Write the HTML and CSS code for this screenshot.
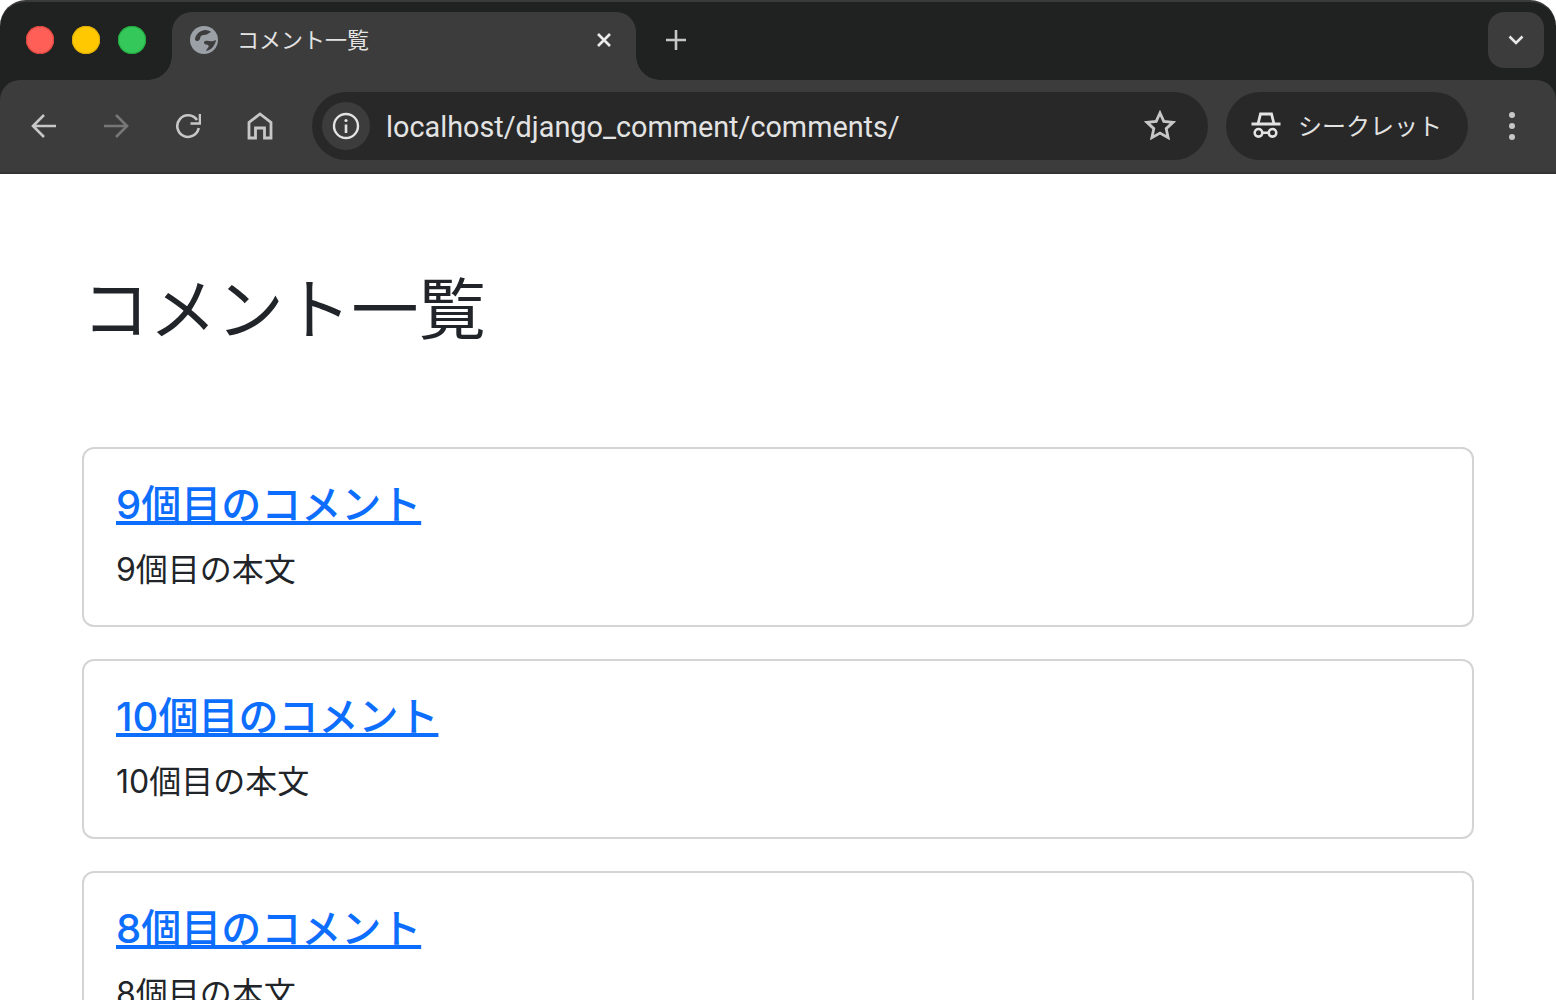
FILE: index.html
```html
<!DOCTYPE html>
<html lang="ja">
<head>
	<title>コメント一覧</title>
	<meta charset="utf-8"/>
	<link rel="stylesheet" href="styles.css">
</head>
<body>
	<div class="window">
		<header class="browser">
			<div class="tabstrip">
				<div class="lights">
					<span class="light red"></span>
					<span class="light yellow"></span>
					<span class="light green"></span>
				</div>
				<div class="tab">
					<svg class="favicon" width="28" height="28" viewBox="0 0 28 28">
						<circle cx="14" cy="14" r="14" fill="#9aa0a6"/>
						<path d="M5 14C5 9 9 5 15 4c3 0 5 1 6 2-3 1-4 3-7 3-3 0-4 2-4 4-1 2-3 3-5 1z" fill="#3c3c3c"/>
						<path d="M14 16c3-3 6 1 12-2-1 6-5 10-10 11 1-3 4-4 2-6-2-1-4 0-4-3z" fill="#3c3c3c"/>
					</svg>
					<span class="tab-title">コメント一覧</span>
					<svg class="tab-close" width="16" height="16" viewBox="0 0 16 16">
						<path d="M2 2l12 12M14 2L2 14" stroke="#ececec" stroke-width="2.6" fill="none"/>
					</svg>
				</div>
				<svg class="new-tab" width="20" height="20" viewBox="0 0 20 20">
					<path d="M10 0v20M0 10h20" stroke="#c7c7c7" stroke-width="2.6" fill="none"/>
				</svg>
				<div class="tab-search">
					<svg width="16" height="10" viewBox="0 0 16 10">
						<path d="M1.5 1.5L8 8l6.5-6.5" stroke="#e8e8e8" stroke-width="2.6" fill="none"/>
					</svg>
				</div>
			</div>
			<div class="toolbar">
				<button class="tool">
					<svg width="26" height="26" viewBox="0 0 26 26"><path d="M25 13H3M13 2L2 13l11 11" stroke="#c7c7c7" stroke-width="2.6" fill="none"/></svg>
				</button>
				<button class="tool">
					<svg width="26" height="26" viewBox="0 0 26 26"><path d="M1 13h22M13 2l11 11-11 11" stroke="#777" stroke-width="2.6" fill="none"/></svg>
				</button>
				<button class="tool">
					<svg width="26" height="26" viewBox="0 0 26 26"><path d="M22 7A10.800 10.800 0 1 0 23.700 15" stroke="#c7c7c7" stroke-width="2.6" fill="none"/><path d="M25 1v9.500h-9.500" stroke="#c7c7c7" stroke-width="2.6" fill="none"/></svg>
				</button>
				<button class="tool">
					<svg width="26" height="28" viewBox="0 0 26 28"><path d="M2 26V10.500L13 2l11 8.500V26h-6.500V16h-9v10z" stroke="#c7c7c7" stroke-width="2.800" fill="none"/></svg>
				</button>
				<div class="omnibox">
					<span class="site-info">
						<svg width="28" height="28" viewBox="0 0 28 28">
							<circle cx="14" cy="14" r="12" stroke="#e3e3e3" stroke-width="2.400" fill="none"/>
							<path d="M14 12.500V21" stroke="#e3e3e3" stroke-width="2.600"/>
							<circle cx="14" cy="8.500" r="1.600" fill="#e3e3e3"/>
						</svg>
					</span>
					<span class="url">localhost/django_comment/comments/</span>
					<svg class="star" width="32" height="30" viewBox="0 0 32 30">
						<path d="M16 3l3.800 8.400 9.200 1-6.800 6.200 1.900 9L16 23l-8.100 4.600 1.900-9L3 12.400l9.200-1z" stroke="#c7c7c7" stroke-width="2.800" fill="none"/>
					</svg>
				</div>
				<div class="incognito">
					<svg width="30" height="28" viewBox="0 0 30 28">
						<path d="M0.500 12h29" stroke="#e3e3e3" stroke-width="2.800"/>
						<path d="M7 12l2.500-10h11L23 12" stroke="#e3e3e3" stroke-width="2.800" fill="none"/>
						<circle cx="7.500" cy="20.800" r="3.800" stroke="#e3e3e3" stroke-width="2.600" fill="none"/>
						<circle cx="21.500" cy="20.800" r="3.800" stroke="#e3e3e3" stroke-width="2.600" fill="none"/>
						<path d="M11 20.800h7" stroke="#e3e3e3" stroke-width="2.600"/>
					</svg>
					<span class="incognito-label">シークレット</span>
				</div>
				<div class="menu-dots"><i></i><i></i><i></i></div>
			</div>
		</header>

		<main class="container">
			<h1 class="page-title">コメント一覧</h1>

			<div class="card">
				<h5 class="card-title"><a href="#">9個目のコメント</a></h5>
				<p class="card-text">9個目の本文</p>
			</div>
			<div class="card">
				<h5 class="card-title"><a href="#">10個目のコメント</a></h5>
				<p class="card-text">10個目の本文</p>
			</div>
			<div class="card">
				<h5 class="card-title"><a href="#">8個目のコメント</a></h5>
				<p class="card-text">8個目の本文</p>
			</div>
		</main>
	</div>
</body>
</html>
```

FILE: styles.css
```css
*{
	box-sizing: border-box;
}

html,body{
	margin: 0;
	padding: 0;
	height: 100%;
	overflow: hidden;
	background: white;
}

body{
	font-family: Inter, "Noto Sans CJK JP", sans-serif;
	color: #212529;
}

.window{
	height: 1000px;
	overflow: hidden;
}

.browser{
	background: #202221;
	border-top: 2px solid #3a3a3a;
	border-radius: 26px 26px 0 0;
	overflow: hidden;
}

.tabstrip{
	height: 78px;
	display: flex;
	align-items: flex-start;
	padding-top: 10px;
}

.lights{
	width: 172px;
	height: 56px;
	display: flex;
	align-items: center;
	gap: 18px;
	padding-left: 26px;
}

.light{
	width: 28px;
	height: 28px;
	border-radius: 50%;
}

.red{ background: #ff5f57; box-shadow: inset 0 0 0 1px #e0443e; }
.yellow{ background: #ffc800; box-shadow: inset 0 0 0 1px #e0ae00; }
.green{ background: #34c759; box-shadow: inset 0 0 0 1px #22a83e; }

.tab{
	position: relative;
	width: 464px;
	height: 68px;
	background: #3c3c3c;
	border-radius: 20px 20px 0 0;
	display: flex;
	align-items: center;
	padding: 0 24px 12px 18px;
}

.tab::before,
.tab::after{
	content: "";
	position: absolute;
	bottom: 0;
	width: 24px;
	height: 24px;
}

.tab::before{
	left: -24px;
	background: radial-gradient(circle at 0 0, transparent 23.500px, #3c3c3c 24px);
}

.tab::after{
	right: -24px;
	background: radial-gradient(circle at 100% 0, transparent 23.500px, #3c3c3c 24px);
}

.favicon{
	flex: none;
}

.tab-title{
	margin: 0 0 4px 19px;
	flex: 1;
	font-size: 22px;
	color: #e3e3e3;
	white-space: nowrap;
}

.new-tab{
	margin: 18px 0 0 30px;
}

.tab-search{
	margin-left: auto;
	margin-right: 12px;
	width: 56px;
	height: 56px;
	border-radius: 16px;
	background: #3c3c3c;
	display: flex;
	align-items: center;
	justify-content: center;
}

.toolbar{
	height: 94px;
	background: #3c3c3c;
	border-radius: 20px 20px 0 0;
	border-bottom: 2px solid #333;
	display: flex;
	align-items: center;
	padding: 0 0 0 8px;
	position: relative;
}

.tool{
	width: 72px;
	height: 72px;
	padding: 0;
	border: 0;
	background: none;
	display: flex;
	align-items: center;
	justify-content: center;
}

.omnibox{
	width: 896px;
	height: 68px;
	margin-left: 16px;
	padding: 0 32px 0 10px;
	border-radius: 34px;
	background: #282828;
	display: flex;
	align-items: center;
}

.site-info{
	width: 48px;
	height: 48px;
	border-radius: 50%;
	background: #3c3c3c;
	display: flex;
	align-items: center;
	justify-content: center;
}

.url{
	flex: 1;
	margin: 1px 0 0 16px;
	font-family: Roboto, sans-serif;
	font-size: 28.800px;
	color: #e3e3e3;
}

.star{
	margin-bottom: 2px;
}

.incognito{
	width: 242px;
	height: 68px;
	margin-left: 18px;
	border-radius: 34px;
	background: #282828;
	display: flex;
	align-items: center;
	gap: 17px;
	padding-left: 25px;
	font-size: 24px;
	color: #e3e3e3;
}

.incognito-label{
	margin-bottom: 4px;
}

.menu-dots{
	margin-left: 41px;
	display: flex;
	flex-direction: column;
	gap: 5.300px;
}

.menu-dots i{
	width: 6px;
	height: 6px;
	border-radius: 50%;
	background: #c7c7c7;
}

.container{
	padding: 96px 82px 0;
}

.page-title{
	margin: 0 0 96px;
	font-size: 67.300px;
	font-weight: 400;
	line-height: 1.200;
}

.card{
	height: 180px;
	margin-bottom: 32px;
	padding: 32px;
	border: 2px solid #d3d4d5;
	border-radius: 12px;
}

.card-title{
	margin: 0 0 17px;
	font-size: 40px;
	font-weight: 500;
	line-height: 1.200;
}

.card-title a{
	color: #0d6efd;
	text-decoration-thickness: 4px;
}

.card-text{
	margin: 0;
	font-size: 32px;
	line-height: 1.500;
}
```
